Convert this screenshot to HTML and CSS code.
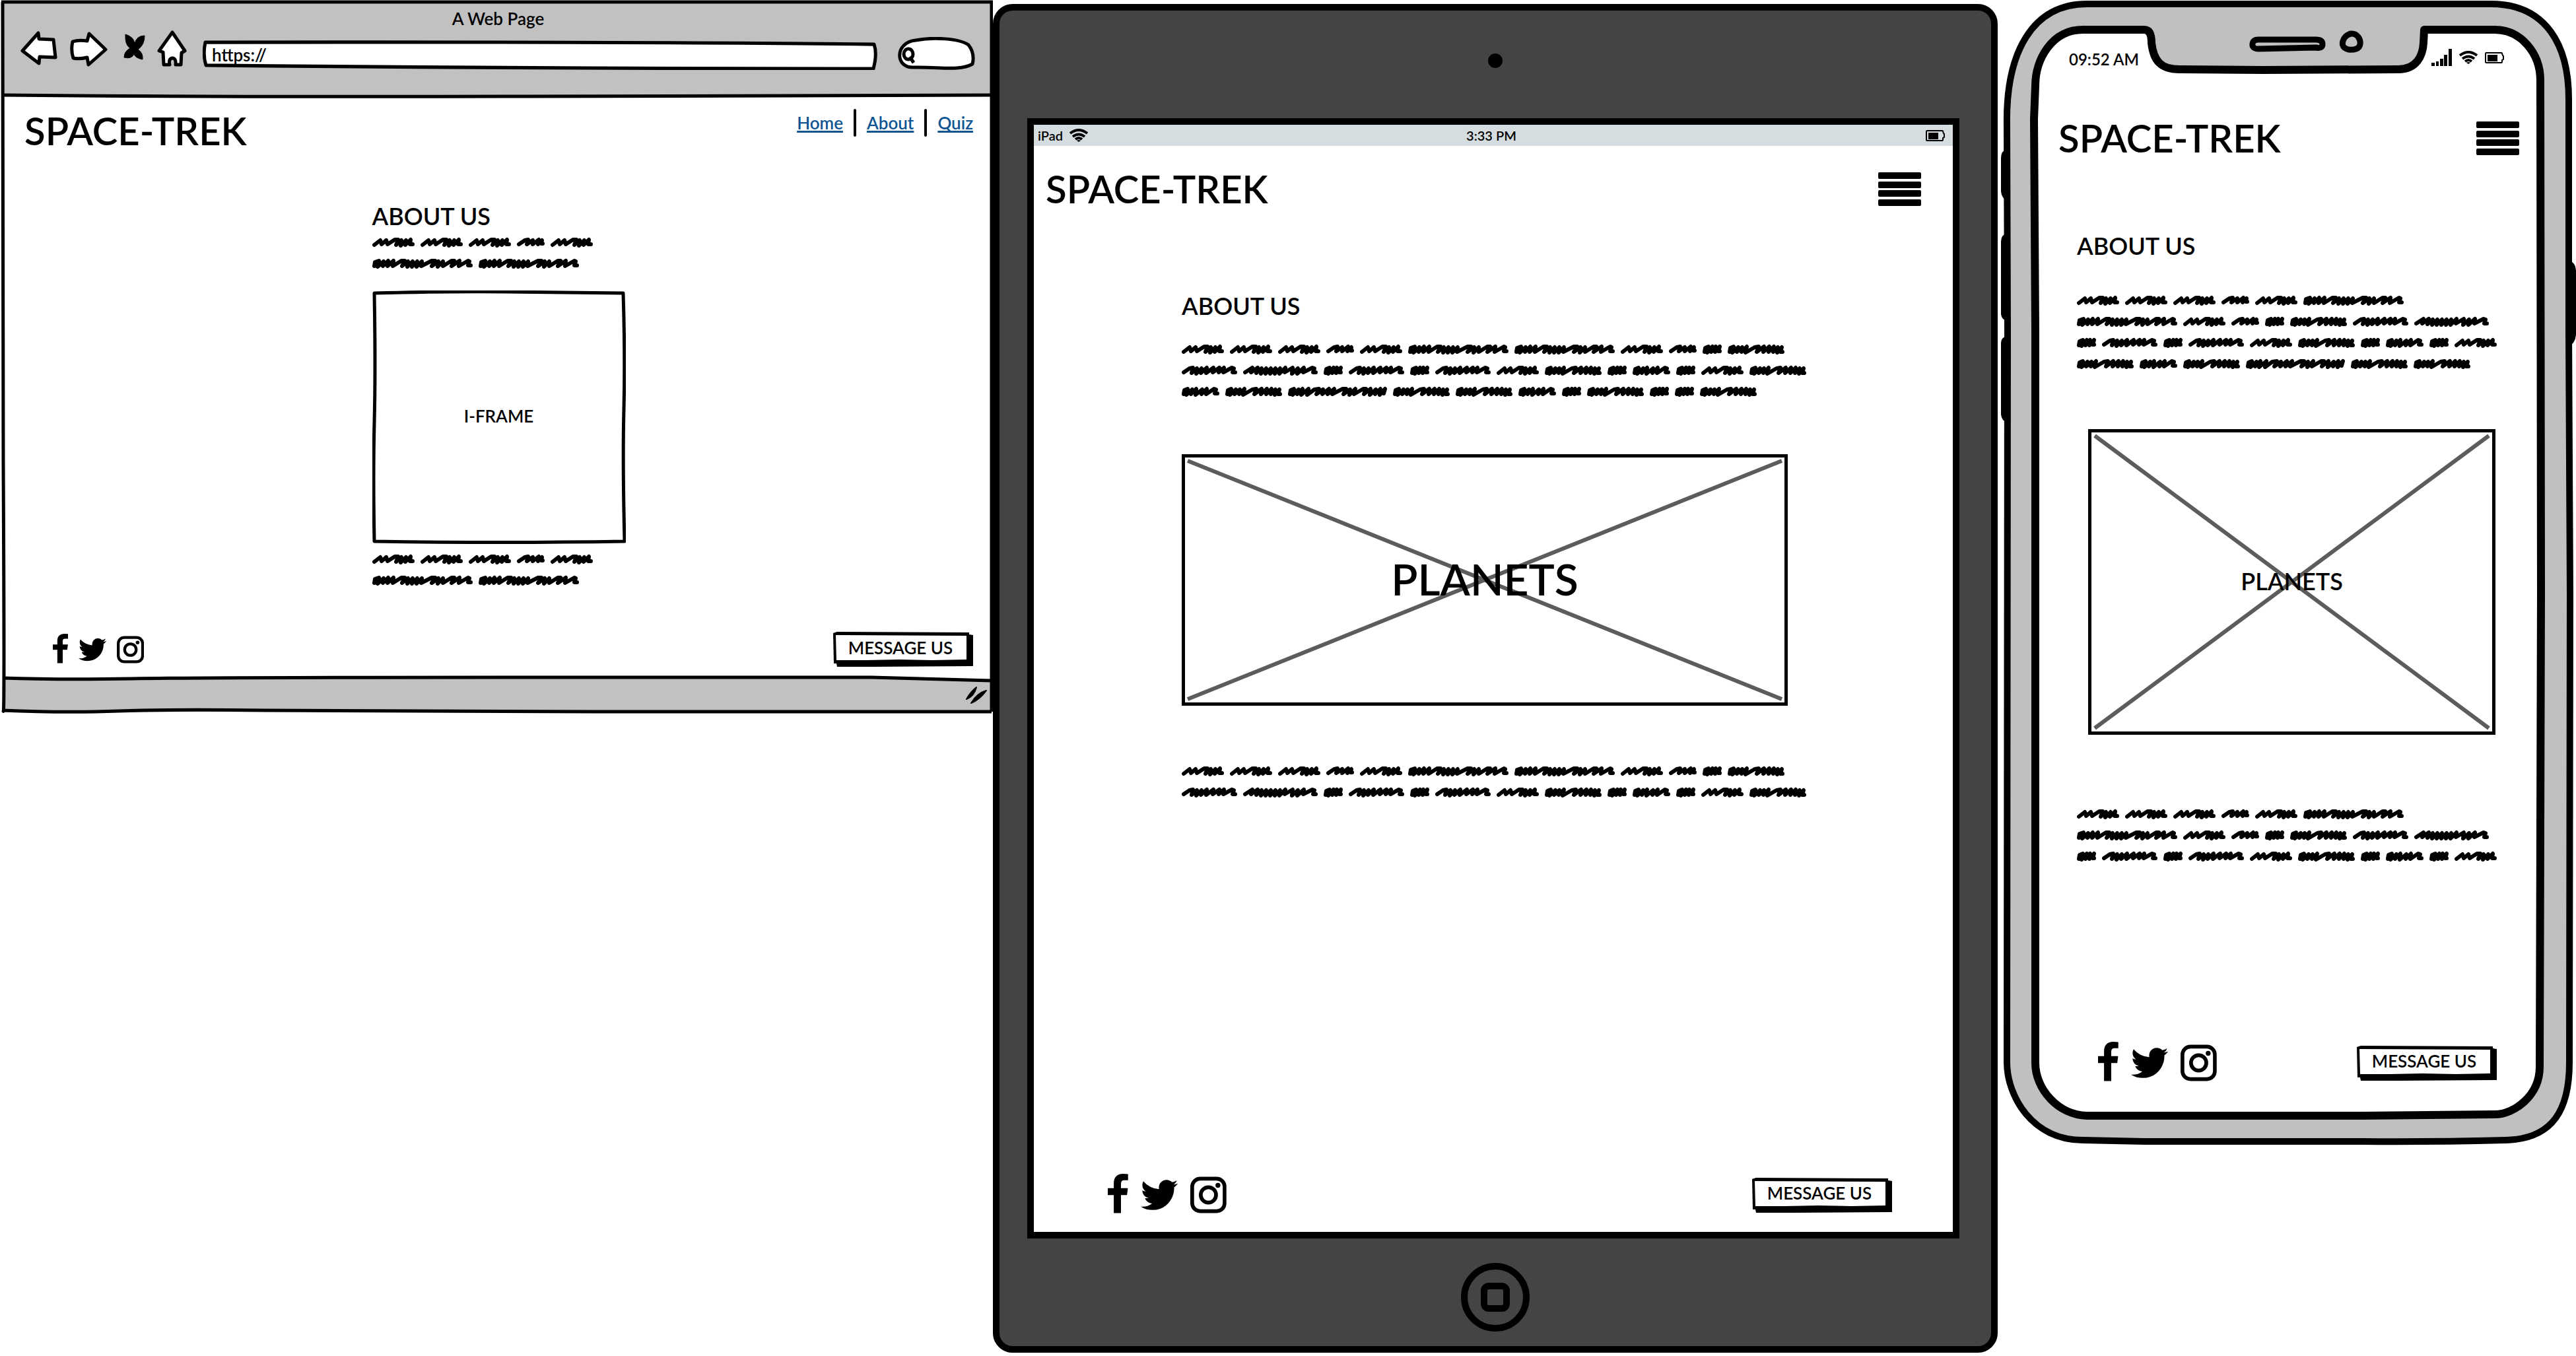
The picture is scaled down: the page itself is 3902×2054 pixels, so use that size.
FILE: index.html
```html
<!DOCTYPE html>
<html lang="en">
<head>
<meta charset="utf-8">
<title>Space-Trek wireframes</title>
<link rel="stylesheet" href="styles.css">
<script src="scribble.js" defer></script>
</head>
<body>
<svg class="defs" aria-hidden="true">
  <symbol id="facebook" viewBox="479 0 864 1792"><path d="M1343 12v264h-157q-86 0-116 36t-30 108v189h293l-39 296h-254v759h-306v-759h-255v-296h255v-218q0-186 104-288.500t277-102.500q147 0 228 12z"/></symbol>
  <symbol id="twitter" viewBox="108 0 1576 1792"><path d="M1684 408q-67 98-162 167 1 14 1 42 0 130-38 259.500t-115.500 248.500-184.500 210.500-258 146-323 54.500q-271 0-496-145 35 4 78 4 225 0 401-138-105-2-188-64.500t-114-159.500q33 5 61 5 43 0 85-11-112-23-185.500-111.500t-73.500-205.500v-4q68 38 146 41-66-44-105-115t-39-154q0-88 44-163 121 149 294.500 238.500t371.500 99.500q-8-38-8-74 0-134 94.500-228.500t228.500-94.500q140 0 236 102 109-21 205-78-37 115-142 178 93-10 186-50z"/></symbol>
  <symbol id="instagram" viewBox="128 0 1536 1792"><rect x="208" y="208" width="1376" height="1376" rx="340" fill="none" stroke="#000" stroke-width="160"/><circle cx="896" cy="896" r="325" fill="none" stroke="#000" stroke-width="160"/><circle cx="1300" cy="492" r="104"/></symbol>
  <symbol id="menu" viewBox="0 0 65 51"><rect width="65" height="10" rx="2"/><rect y="14" width="65" height="10" rx="2"/><rect y="27" width="65" height="10" rx="2"/><rect y="41" width="65" height="10" rx="2"/></symbol>
  <symbol id="wifi" viewBox="0 0 28 20"><g fill="none" stroke="#000" stroke-width="4"><path d="M1 7Q14 -3 27 7"/><path d="M5 12Q14 5 23 12"/><path d="M9 16Q14 12 19 16"/></g><path d="M11 18Q14 16 17 18L14 20Z"/></symbol>
  <symbol id="battery" viewBox="0 0 29 17"><path d="M2 1H25Q26 1 26 2L27 5L28 6V11L26 12V15Q26 16 25 16H2Q1 16 1 15V2Q1 1 2 1Z" fill="none" stroke="#000" stroke-width="2"/><rect x="4" y="4" width="15" height="10"/></symbol>
  <symbol id="button-face" viewBox="0 0 212 53" preserveAspectRatio="none"><path d="M0 2L6 0L206 1V4L212 5V52L60 53H6L5 48H1Z"/><path d="M4 5L202 6V42L150 43L100 42L50 43H5Z" fill="#fff"/></symbol>
</svg>

<div class="board">

  <section class="browser" aria-label="Desktop">
    <svg class="art" viewBox="0 0 1504 1081" preserveAspectRatio="none" aria-hidden="true">
      <path d="M4 4H1502V145H4Z" fill="#c1c1c1"/>
      <path d="M4 1027Q90 1030 200 1028T850 1026H1320L1501 1031V1078H310Q150 1080 4 1076Z" fill="#c1c1c1"/>
      <g fill="none" stroke="#000" stroke-width="5">
        <path d="M2 3H1504"/>
        <path d="M4 3Q3 300 5 700T5 1076"/>
        <path d="M1502 3V1078"/>
        <path d="M4 144Q300 147 800 146T1502 144"/>
        <path d="M4 1027Q90 1030 200 1028T850 1026H1320L1502 1031"/>
        <path d="M3 1076Q100 1080 180 1077T400 1076Q700 1078 900 1078H1502"/>
      </g>
    </svg>
    <header class="chrome">
      <p class="chrome-title">A Web Page</p>
      <div class="toolbar">
        <button class="tool" aria-label="Back"><svg width="60" height="60"><path d="M3 31L27 4L28 13L50 14L53 41L29 40L28 50Z"/></svg></button>
        <button class="tool" aria-label="Forward"><svg width="62" height="60"><path d="M5 17Q14 14 27 16L30 5L55 29L29 52L27 41Q15 44 6 42Q2 30 5 17Z"/></svg></button>
        <button class="tool" aria-label="Stop"><svg width="42" height="60"><path class="solid" d="M9 6Q22 10 23 20Q26 8 38 8Q38 22 28 29Q36 34 35 44Q24 42 22 36Q18 44 7 41Q7 32 16 27Q8 22 9 6Z"/></svg></button>
        <button class="tool" aria-label="Home"><svg width="56" height="60"><path d="M24 3L43 31L38 34L37 52H29Q30 42 24 42Q18 43 20 52H11L10 33L4 31Z"/></svg></button>
        <label class="address">
          <svg class="art" viewBox="0 0 1024 44" preserveAspectRatio="none"><path d="M4 3Q0 22 5 37Q500 42 1018 42Q1024 20 1019 6Q700 2 4 3Z"/></svg>
          <input type="text" value="https://" aria-label="Address">
        </label>
        <label class="search">
          <svg class="art" viewBox="0 0 135 50" preserveAspectRatio="none"><path d="M42 46C12 48 12 8 44 5C70 0 110 2 124 12Q134 25 130 41C110 52 80 45 42 46Z"/><ellipse cx="33" cy="26" rx="7" ry="8"/><path d="M35 30L41 39"/></svg>
          <input type="search" aria-label="Search">
        </label>
      </div>
    </header>
    <div class="page">
      <header class="masthead">
        <h1>SPACE-TREK</h1>
        <nav class="links"><a href="#">Home</a><i></i><a href="#">About</a><i></i><a href="#">Quiz</a></nav>
      </header>
      <main class="article">
        <h2>ABOUT US</h2>
        <div class="scribble" data-words="AAABA/CC"></div>
        <div class="iframe-box">
          <svg class="art" viewBox="0 0 384 384" preserveAspectRatio="none" aria-hidden="true"><path d="M3 4Q120 1 200 2T380 4Q383 100 381 180T382 380Q200 383 3 380Q1 280 3 200T3 4Z"/></svg>
          <span>I-FRAME</span>
        </div>
        <div class="scribble" data-words="AAABA/CC"></div>
      </main>
      <footer class="footer">
        <div class="social small">
          <a href="#" aria-label="Facebook"><svg viewBox="0 0 864 1792"><use href="#facebook"/></svg></a>
          <a href="#" aria-label="Twitter"><svg viewBox="0 0 1576 1792"><use href="#twitter"/></svg></a>
          <a href="#" aria-label="Instagram"><svg viewBox="0 0 1536 1792"><use href="#instagram"/></svg></a>
        </div>
        <button class="message"><svg class="art" aria-hidden="true"><use href="#button-face"/></svg><span>MESSAGE US</span></button>
      </footer>
    </div>
    <div class="statusline"><svg width="34" height="26" aria-hidden="true"><path d="M2 19Q8 8 17 1Q14 14 2 19ZM9 25Q22 20 32 6Q18 10 9 25Z" stroke="#000" stroke-width="2" stroke-linejoin="round"/></svg></div>
  </section>

  <section class="tablet" aria-label="Tablet">
    <div class="camera"></div>
    <div class="screen">
      <div class="tablet-status"><span class="carrier">iPad <svg width="28" height="20"><use href="#wifi"/></svg></span><span>3:33 PM</span><span class="power"><svg width="29" height="17"><use href="#battery"/></svg></span></div>
      <header class="masthead">
        <h1>SPACE-TREK</h1>
        <button class="menu" aria-label="Menu"><svg width="65" height="51"><use href="#menu"/></svg></button>
      </header>
      <main class="article">
        <h2>ABOUT US</h2>
        <div class="scribble" data-words="AAABACCABDE/FGDFDFAEDHDAE/HEIEEHDEDDE"></div>
        <div class="picture">
          <svg class="art" viewBox="0 0 918 381" preserveAspectRatio="none" aria-hidden="true"><path d="M9 10L909 371M909 10L9 371"/></svg>
          <span>PLANETS</span>
        </div>
        <div class="scribble" data-words="AAABACCABDE/FGDFDFAEDHDAE"></div>
      </main>
      <footer class="footer">
        <div class="social">
          <a href="#" aria-label="Facebook"><svg viewBox="0 0 864 1792"><use href="#facebook"/></svg></a>
          <a href="#" aria-label="Twitter"><svg viewBox="0 0 1576 1792"><use href="#twitter"/></svg></a>
          <a href="#" aria-label="Instagram"><svg viewBox="0 0 1536 1792"><use href="#instagram"/></svg></a>
        </div>
        <button class="message"><svg class="art" aria-hidden="true"><use href="#button-face"/></svg><span>MESSAGE US</span></button>
      </footer>
    </div>
    <button class="home" aria-label="Home"><span></span></button>
  </section>

  <section class="phone" aria-label="Phone">
    <svg class="art" viewBox="0 0 874 1736" preserveAspectRatio="none" aria-hidden="true">
      <path d="M12 226Q3 228 3 240V290Q4 300 12 304ZM12 353Q3 356 3 366V476Q4 484 12 486ZM12 509Q3 511 3 520V628Q4 637 12 640ZM862 393Q874 398 874 410V505Q874 520 862 525Z"/>
      <path d="M135 6H745C830 6 863 70 863 150V500L865 900L864 1609C864 1680 840 1725 768 1727Q650 1730 550 1729H220L127 1727C50 1727 12 1660 12 1609L13 500L12 190C10 80 50 5 135 6Z" fill="#c0c0c0" stroke="#000" stroke-width="10"/>
      <path d="M127 45H220C228 45 231 52 231 65C234 92 245 105 273 105L400 106L605 105C632 105 642 85 643 65L644 45H751C790 45 820 80 820 122L821 900L819 1616C819 1660 780 1688 751 1688L550 1690H133C90 1689 55 1650 55 1610V500L53 180L55 130C55 90 80 45 127 45Z" fill="#fff" stroke="#000" stroke-width="12" stroke-linejoin="round"/>
      <g fill="none" stroke="#000" stroke-width="9" stroke-linejoin="round">
        <path d="M393 60H480Q490 60 490 67T480 72L393 74Q383 74 384 66Q385 60 393 60Z"/>
        <path d="M533 51C543 50 548 60 547 67S538 76 529 75Q518 72 521 62Q524 53 533 51Z"/>
      </g>
    </svg>
    <div class="phone-status">
      <span>09:52 AM</span>
      <div class="signals">
        <svg width="31" height="26"><path d="M0 21H5V26H0ZM7 19H11V26H7ZM13 15H18V26H13ZM19 9H24V26H19ZM26 0H31V26H26Z"/></svg>
        <svg width="28" height="20"><use href="#wifi"/></svg>
        <svg width="29" height="17"><use href="#battery"/></svg>
      </div>
    </div>
    <header class="masthead">
      <h1>SPACE-TREK</h1>
      <button class="menu" aria-label="Menu"><svg width="65" height="51"><use href="#menu"/></svg></button>
    </header>
    <main class="article">
      <h2>ABOUT US</h2>
      <div class="scribble" data-words="AAABAC/CABDEFG/DFDFAEDHDA/EHEIEE"></div>
      <div class="picture">
        <svg class="art" viewBox="0 0 617 463" preserveAspectRatio="none" aria-hidden="true"><path d="M10 10L607 453M607 10L10 453"/></svg>
        <span>PLANETS</span>
      </div>
      <div class="scribble" data-words="AAABAC/CABDEFG/DFDFAEDHDA"></div>
    </main>
    <footer class="footer">
      <div class="social">
        <a href="#" aria-label="Facebook"><svg viewBox="0 0 864 1792"><use href="#facebook"/></svg></a>
        <a href="#" aria-label="Twitter"><svg viewBox="0 0 1576 1792"><use href="#twitter"/></svg></a>
        <a href="#" aria-label="Instagram"><svg viewBox="0 0 1536 1792"><use href="#instagram"/></svg></a>
      </div>
      <button class="message"><svg class="art" aria-hidden="true"><use href="#button-face"/></svg><span>MESSAGE US</span></button>
    </footer>
  </section>

</div>
</body>
</html>
```

FILE: styles.css
```css
* { box-sizing: border-box; }

body {
  margin: 0;
  background: #fff;
  color: #000;
  font-family: Lato, "Open Sans", sans-serif;
  font-weight: 600;
  font-size: 26px;
}

h1, h2, p { margin: 0; font-weight: inherit; }
h1 { font-size: 58px; line-height: 66px; }
h2 { font-size: 36px; line-height: 44px; }

button, input {
  border: 0;
  padding: 0;
  background: none;
  color: inherit;
  font: inherit;
}

svg { display: block; }
.defs { position: absolute; width: 0; height: 0; }

.art {
  position: absolute;
  inset: 0;
  width: 100%;
  height: 100%;
  z-index: -1;
}

.board {
  display: grid;
  grid-template-columns: minmax(0, 1504fr) minmax(0, 1524fr) minmax(0, 874fr);
  align-items: start;
}

.browser, .phone, .address, .search, .message, .iframe-box, .picture {
  position: relative;
  isolation: isolate;
}

/* shared page parts */
.masthead { display: flex; justify-content: space-between; align-items: center; }
.menu { height: 51px; }

.scribble { display: flex; flex-direction: column; gap: 16px; }
.scribble-line { display: flex; gap: 9px; }
.word {
  flex: none;
  fill: none;
  stroke: #000;
  stroke-width: 6;
  stroke-linecap: round;
  stroke-linejoin: round;
}

.picture {
  display: flex;
  align-items: center;
  justify-content: center;
  padding-bottom: 4px;
  border: 5px solid #000;
}
.picture .art { inset: -5px; width: calc(100% + 10px); height: calc(100% + 10px); }
.picture path { fill: none; stroke: #5c5c5c; stroke-width: 6; }

.footer { display: flex; justify-content: space-between; align-items: center; }
.social { display: flex; gap: 19px; }
.social svg { height: 64px; }
.social.small { gap: 16px; }
.social.small svg { height: 48px; }
.message { width: 212px; height: 53px; padding: 0 8px 6px 0; }

/* desktop browser */
.browser { padding: 0 2px; }
.chrome { padding: 10px 24px 41px 29px; }
.chrome-title { text-align: center; line-height: 36px; }
.toolbar { display: flex; align-items: flex-end; gap: 14px; }
.tool path { fill: #fff; stroke: #000; stroke-width: 5; stroke-linejoin: round; }
.tool .solid { fill: #000; stroke-width: 1; }
.address { flex: 1; height: 45px; }
.address input { width: 100%; height: 44px; padding: 0 14px; }
.address path, .search path, .search ellipse { fill: #fff; stroke: #000; stroke-width: 5; stroke-linejoin: round; }
.search { width: 135px; height: 50px; }
.search input { width: 100%; height: 50px; padding: 0 16px 0 46px; }

.page { padding: 18px 28px 15px 35px; }
.page .masthead { align-items: flex-start; }
.links { display: flex; align-items: center; gap: 16px; }
.links a {
  color: #0f5594;
  text-decoration-thickness: 3px;
  text-underline-offset: 2px;
  text-decoration-skip-ink: none;
}
.links i { width: 4px; height: 42px; border-radius: 2px; background: #000; }

.page .article { width: 384px; margin: 74px auto 70px; }
.page .article h2 { margin-bottom: 10px; }
.iframe-box {
  display: flex;
  align-items: center;
  justify-content: center;
  height: 384px;
  margin: 33px 0 15px;
  padding-bottom: 4px;
}
.iframe-box path { fill: none; stroke: #000; stroke-width: 5; stroke-linejoin: round; }
.page .footer { padding-left: 43px; }
.statusline { display: flex; align-items: center; justify-content: flex-end; height: 56px; padding-right: 6px; }

/* tablet */
.tablet {
  display: flex;
  flex-direction: column;
  align-items: center;
  margin: 6px 2px 4px 0;
  padding: 65px 42px 22px;
  border: 10px solid #000;
  border-radius: 30px;
  background: #444;
}
.camera { width: 22px; height: 22px; border-radius: 50%; background: #000; }
.screen {
  align-self: stretch;
  margin: 76px 6px 37px 0;
  border: 10px solid #000;
  background: #fff;
}
.tablet-status {
  display: grid;
  grid-template-columns: 1fr auto 1fr;
  align-items: center;
  height: 32px;
  padding: 0 12px 0 6px;
  background: #d6dde0;
  font-size: 20px;
}
.carrier { display: flex; align-items: center; gap: 10px; }
.power { justify-self: end; }
.tablet .masthead { padding: 32px 48px 0 18px; }
.tablet .article { padding: 122px 250px 570px 224px; }
.tablet h2 { margin-bottom: 36px; }
.tablet .picture { height: 381px; margin: 87px 0 91px; font-size: 66px; }
.tablet .footer { padding: 0 92px 24px 112px; }
.home {
  display: grid;
  place-items: center;
  width: 104px;
  height: 104px;
  border: 10px solid #000;
  border-radius: 50%;
}
.home span { width: 44px; height: 44px; border: 10px solid #000; border-radius: 12px; }

/* phone */
.phone { padding: 74px 0 94px; }
.phone-status {
  display: flex;
  justify-content: space-between;
  padding: 0 109px 0 106px;
  font-size: 24px;
  line-height: 32px;
}
.signals { display: flex; align-items: center; gap: 11px; height: 26px; }
.phone .masthead { padding: 70px 86px 0 90px; }
.phone .article { padding: 108px 122px 273px 118px; }
.phone h2 { margin-bottom: 53px; }
.phone .picture { height: 463px; margin: 91px 0 112px 17px; font-size: 36px; }
.phone .footer { padding: 0 120px 0 150px; }
```

FILE: scribble.js
```js
// Hand-drawn filler words: each has a width and one pen stroke.
const WORDS = {
  A: [64, "M3 12L12 5L14 11L21 5L23 11L34 4L39 4L36 12L44 5L43 13L51 5L50 12L58 4L57 11L61 11"],
  B: [42, "M3 11L12 5L17 4L15 11L24 5L24 11L33 4L32 11L38 5L37 10L39 10"],
  C: [152, "M3 12L4 6L10 4L8 13L17 5L16 12L24 4L23 12L32 4L31 12L44 4L49 4L45 12L54 5L53 13L61 5L60 13L68 5L67 13L75 5L74 12L90 4L95 4L90 12L100 5L99 13L107 5L107 12L120 4L124 4L120 12L132 4L131 12L145 4L147 5L145 11L149 11"],
  D: [29, "M3 12L4 6L9 4L7 13L15 4L13 12L20 4L19 12L26 4L24 11L26 11"],
  E: [86, "M3 12L4 6L9 4L7 13L16 5L14 12L22 5L21 12L29 4L27 13L41 5L47 4L44 12L55 4L54 12L63 4L62 12L70 4L69 12L76 5L75 13L82 5L80 12L83 12"],
  F: [84, "M3 11L12 5L17 4L15 12L23 5L22 13L30 5L29 12L38 4L37 12L48 4L47 11L57 4L56 11L64 4L63 11L76 4L79 5L77 11L81 11"],
  G: [113, "M3 11L14 4L12 11L22 4L20 12L28 5L27 13L35 5L34 13L42 5L41 13L49 5L48 13L56 5L55 13L64 4L63 11L75 4L74 13L83 5L82 13L92 4L91 11L105 4L108 5L106 11L110 11"],
  H: [57, "M3 12L4 6L9 4L7 13L16 5L14 12L22 4L21 13L31 5L30 12L38 4L37 12L49 4L52 5L50 11L54 11"],
  I: [150, "M3 12L4 6L9 4L7 13L16 5L14 12L22 4L20 13L31 4L29 13L40 5L47 4L43 12L53 5L52 12L62 4L60 12L70 4L67 12L83 4L88 4L84 12L94 5L93 13L102 4L100 12L114 4L118 4L115 12L125 4L124 13L133 5L132 12L140 4L139 13L147 4L145 11"]
};

for (const block of document.querySelectorAll(".scribble")) {
  block.innerHTML = block.dataset.words.split("/").map(line =>
    '<div class="scribble-line">' + [...line].map(key => {
      const [width, stroke] = WORDS[key];
      return `<svg class="word" width="${width}" height="16" aria-hidden="true"><path d="${stroke}"/></svg>`;
    }).join("") + "</div>"
  ).join("");
}
```
